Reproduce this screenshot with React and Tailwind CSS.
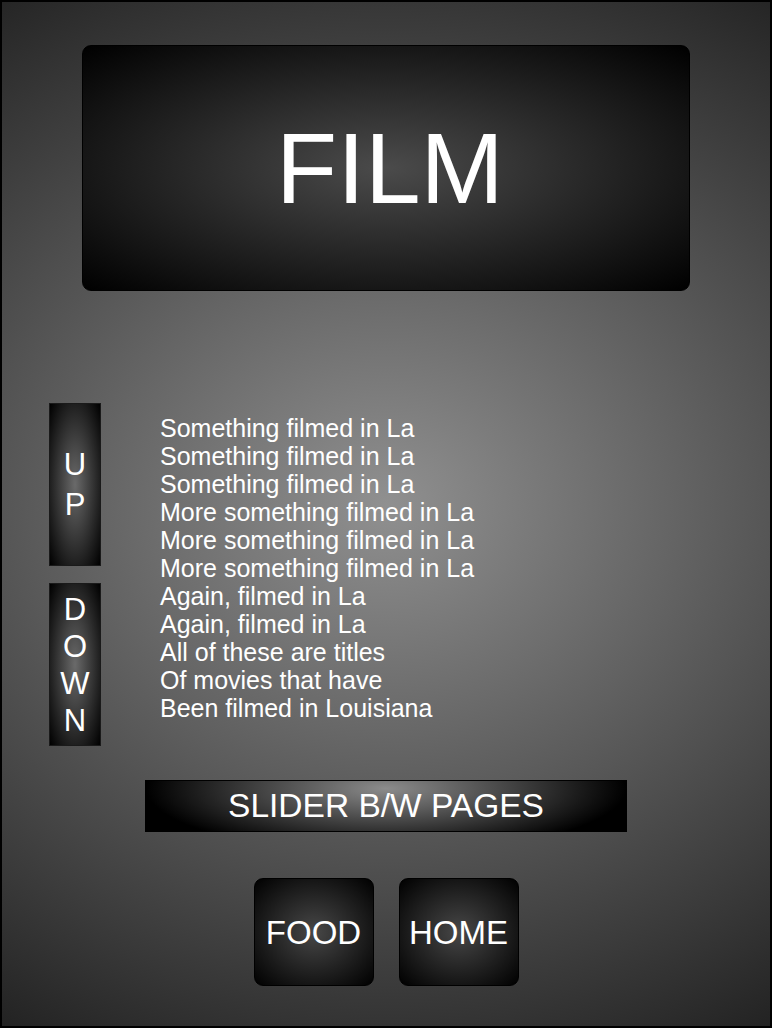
const titles = [
  "Something filmed in La",
  "Something filmed in La",
  "Something filmed in La",
  "More something filmed in La",
  "More something filmed in La",
  "More something filmed in La",
  "Again, filmed in La",
  "Again, filmed in La",
  "All of these are titles",
  "Of movies that have",
  "Been filmed in Louisiana",
];

function NavButton({ label }) {
  return (
    <button className="flex h-[108px] w-[120px] items-center justify-center rounded-[9px] border border-black bg-[radial-gradient(ellipse_at_center,#474747,#000)] text-[33px] leading-none text-white">
      {label}
    </button>
  );
}

export default function App() {
  return (
    <div className="flex h-[1028px] w-[772px] flex-col border-2 border-black bg-[radial-gradient(ellipse_725px_620px_at_384px_503px,#909090,#222)] font-['Liberation_Sans',Arial,sans-serif] text-white">
      <div className="ml-[80px] mt-[43px] flex h-[246px] w-[608px] items-center justify-center rounded-[9px] border border-black bg-[radial-gradient(ellipse_at_center,#4b4b4b,#000)] pl-[8px] text-[100px] leading-none">
        FILM
      </div>

      <div className="mt-[112px] flex">
        <div className="ml-[47px] flex w-[52px] flex-col gap-[17px]">
          <button className="flex h-[163px] flex-col items-center justify-center border border-[#1a1a1a] bg-[radial-gradient(ellipse_at_center,#6a6a6a,#000)] text-[31px] leading-[40px] text-white">
            <span>U</span>
            <span>P</span>
          </button>
          <button className="flex h-[163px] flex-col items-center justify-center border border-[#1a1a1a] bg-[radial-gradient(ellipse_at_center,#6a6a6a,#000)] text-[31px] leading-[37px] text-white">
            <span>D</span>
            <span>O</span>
            <span>W</span>
            <span>N</span>
          </button>
        </div>
        <ul className="ml-[59px] mt-[11px] text-[25px] leading-[28px]">
          {titles.map((t, i) => (
            <li key={i}>{t}</li>
          ))}
        </ul>
      </div>

      <div className="mx-auto mt-[34px] flex h-[52px] w-[482px] items-center justify-center border border-black bg-[radial-gradient(ellipse_50%_130%_at_50%_15%,#8c8c8c,#000)] text-[33.5px] leading-none">
        SLIDER B/W PAGES
      </div>

      <div className="mt-[46px] flex justify-center gap-[25px]">
        <NavButton label="FOOD" />
        <NavButton label="HOME" />
      </div>
    </div>
  );
}
